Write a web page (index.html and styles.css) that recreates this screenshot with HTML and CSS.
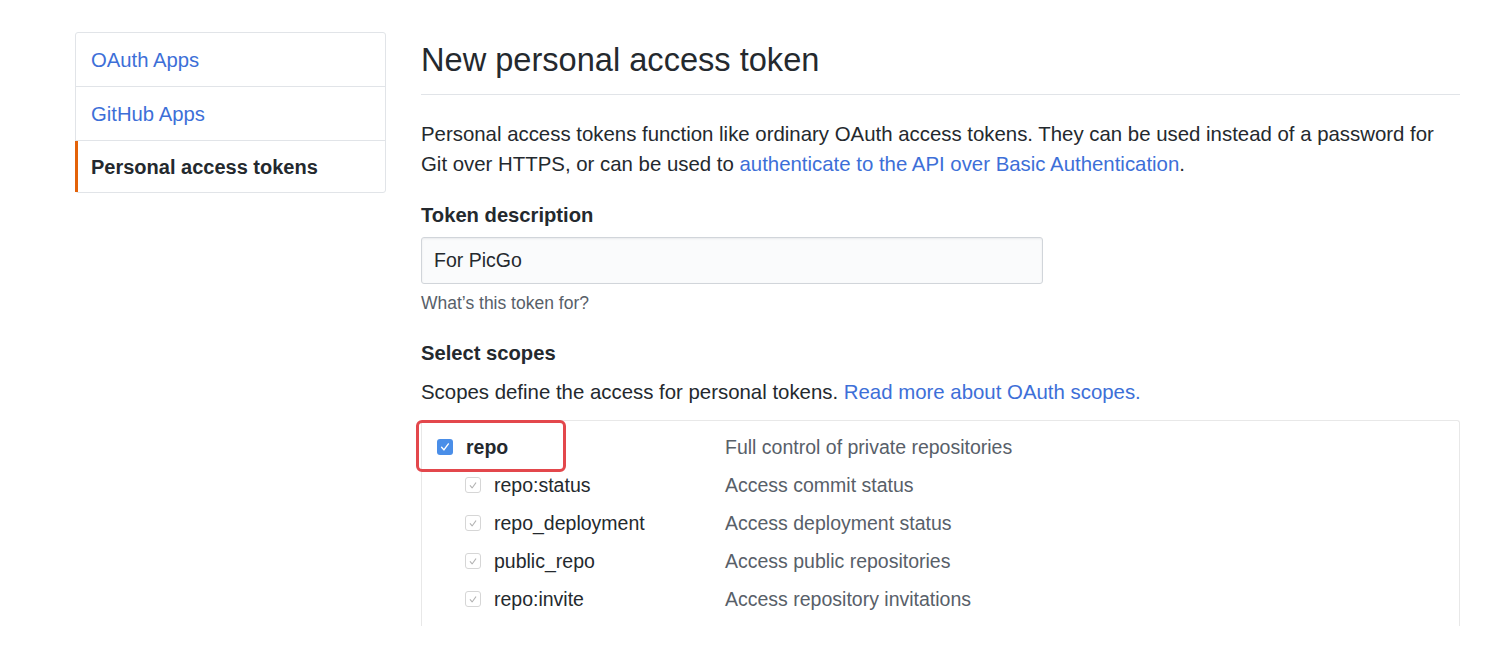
FILE: index.html
```html
<!DOCTYPE html>
<html lang="en">
<head>
<meta charset="utf-8">
<title>New personal access token</title>
<link rel="stylesheet" href="styles.css">
</head>
<body>
<div class="page">
  <nav class="sidebar">
    <a class="nav-item" href="#">OAuth Apps</a>
    <a class="nav-item" href="#">GitHub Apps</a>
    <a class="nav-item selected" href="#">Personal access tokens</a>
  </nav>
  <main class="main">
    <h1 class="title">New personal access token</h1>
    <p class="intro">Personal access tokens function like ordinary OAuth access tokens. They can be used instead of a password for Git over HTTPS, or can be used to <a href="#">authenticate to the API over Basic Authentication</a>.</p>
    <label class="label" for="desc">Token description</label>
    <input id="desc" class="input" type="text" value="For PicGo">
    <p class="note">What’s this token for?</p>
    <h3 class="label scopes-title">Select scopes</h3>
    <p class="scopes-text">Scopes define the access for personal tokens. <a href="#">Read more about OAuth scopes.</a></p>
    <div class="scopes-wrap">
      <div class="scopes">
        <div class="row">
          <div class="name top"><span class="cb cb-on"><svg viewBox="0 0 16 16" width="16" height="16"><path d="M4.6 8.3l2.3 2.6 4.5-6" fill="none" stroke="#fff" stroke-width="1.4" stroke-linecap="round" stroke-linejoin="round"/></svg></span><b>repo</b></div>
          <div class="desc">Full control of private repositories</div>
        </div>
        <div class="row">
          <div class="name sub"><span class="cb cb-dis"><svg viewBox="0 0 16 16" width="15" height="15"><path d="M4.8 8.2l2.2 2.6 4.2-5.8" fill="none" stroke="#b3b3b3" stroke-width="1.2" stroke-linecap="round" stroke-linejoin="round"/></svg></span>repo:status</div>
          <div class="desc">Access commit status</div>
        </div>
        <div class="row">
          <div class="name sub"><span class="cb cb-dis"><svg viewBox="0 0 16 16" width="15" height="15"><path d="M4.8 8.2l2.2 2.6 4.2-5.8" fill="none" stroke="#b3b3b3" stroke-width="1.2" stroke-linecap="round" stroke-linejoin="round"/></svg></span>repo_deployment</div>
          <div class="desc">Access deployment status</div>
        </div>
        <div class="row">
          <div class="name sub"><span class="cb cb-dis"><svg viewBox="0 0 16 16" width="15" height="15"><path d="M4.8 8.2l2.2 2.6 4.2-5.8" fill="none" stroke="#b3b3b3" stroke-width="1.2" stroke-linecap="round" stroke-linejoin="round"/></svg></span>public_repo</div>
          <div class="desc">Access public repositories</div>
        </div>
        <div class="row">
          <div class="name sub"><span class="cb cb-dis"><svg viewBox="0 0 16 16" width="15" height="15"><path d="M4.8 8.2l2.2 2.6 4.2-5.8" fill="none" stroke="#b3b3b3" stroke-width="1.2" stroke-linecap="round" stroke-linejoin="round"/></svg></span>repo:invite</div>
          <div class="desc">Access repository invitations</div>
        </div>
      </div>
      <div class="highlight"></div>
    </div>
  </main>
</div>
</body>
</html>
```

FILE: styles.css
```css
html, body {
  margin: 0;
  background: #fff;
}
body {
  font-family: "Liberation Sans", Helvetica, Arial, sans-serif;
  color: #24292e;
  font-size: 20.4px;
}
a {
  color: #3d6fd8;
  text-decoration: none;
}
.page {
  display: flex;
  align-items: flex-start;
  gap: 35px;
  padding: 32px 0 0 75px;
}
.sidebar {
  width: 311px;
  box-sizing: border-box;
  border: 1px solid #e1e4e8;
  border-radius: 3px;
  display: flex;
  flex-direction: column;
}
.nav-item {
  height: 54px;
  box-sizing: border-box;
  display: flex;
  align-items: center;
  padding: 2px 0 0 15px;
  font-size: 20.3px;
  border-bottom: 1px solid #e1e4e8;
}
.nav-item:last-child {
  border-bottom: 0;
  height: 51px;
}
.nav-item.selected {
  margin-left: -1px;
  border-left: 3px solid #e36209;
  padding-left: 13px;
  color: #24292e;
  font-weight: 700;
  font-size: 20px;
}
.main {
  width: 1039px;
}
.title {
  margin: 0;
  padding: 8px 0 14px;
  font-size: 32.6px;
  line-height: 40px;
  font-weight: 400;
  border-bottom: 1px solid #e1e4e8;
}
.intro {
  margin: 24px 0 0;
  line-height: 30px;
}
.label {
  display: block;
  margin: 21px 0 0;
  font-size: 20.2px;
  line-height: 30px;
  font-weight: 700;
}
.input {
  display: block;
  margin-top: 7px;
  width: 622px;
  height: 47px;
  box-sizing: border-box;
  padding: 0 12px;
  font-family: inherit;
  font-size: 19.5px;
  color: #24292e;
  background: #fafbfc;
  border: 1px solid #d1d5da;
  border-radius: 3px;
  box-shadow: inset 0 1px 2px rgba(27, 31, 35, 0.075);
  outline: none;
}
.note {
  margin: 7px 0 0;
  font-size: 17.5px;
  line-height: 24px;
  color: #586069;
}
.scopes-title {
  margin-top: 23px;
}
.scopes-text {
  margin: 9px 0 0;
  line-height: 30px;
}
.scopes-wrap {
  position: relative;
  margin-top: 13px;
}
.scopes {
  border: 1px solid #e8e8e8;
  border-bottom: 0;
  border-radius: 3px 3px 0 0;
  padding: 7px 0 8px;
  font-size: 19.5px;
}
.row {
  display: grid;
  grid-template-columns: 303px 1fr;
  height: 38px;
  align-items: center;
}
.name {
  display: flex;
  align-items: center;
  gap: 13px;
  padding-left: 15px;
}
.name.sub {
  padding-left: 43px;
  gap: 13px;
}
.name b {
  font-weight: 700;
}
.desc {
  color: #586069;
}
.cb {
  display: inline-flex;
  align-items: center;
  justify-content: center;
  box-sizing: border-box;
  flex: none;
}
.cb-on {
  width: 16px;
  height: 16px;
  border-radius: 3px;
  background: #4a8ee8;
}
.cb-dis {
  width: 16px;
  height: 16px;
  border-radius: 3px;
  border: 1px solid #d6d6d6;
  background: #fff;
}
.highlight {
  position: absolute;
  left: -5px;
  top: 0;
  width: 150px;
  height: 52px;
  box-sizing: border-box;
  border: 3px solid #e3474c;
  border-radius: 6px;
  pointer-events: none;
}
```
